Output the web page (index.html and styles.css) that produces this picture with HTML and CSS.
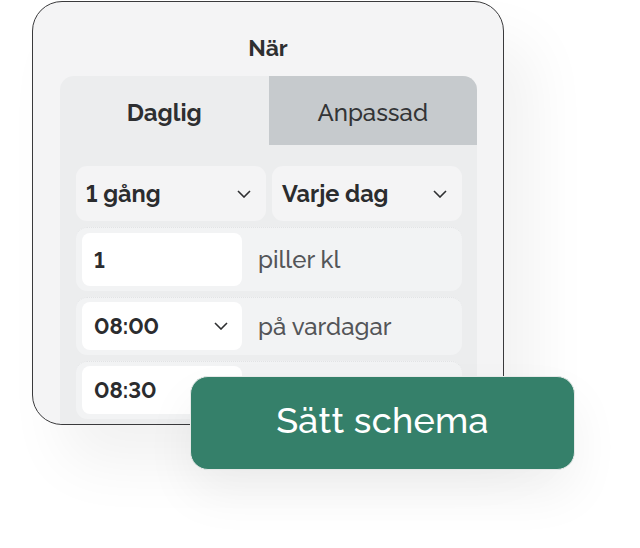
FILE: index.html
```html
<!DOCTYPE html>
<html lang="sv">
<head>
<meta charset="utf-8">
<link rel="stylesheet" href="styles.css">
</head>
<body>
<div class="stage">
  <div class="card">
    <h1 class="title">När</h1>
    <div class="panel">
      <div class="tabs">
        <div class="tab tab-active">Daglig</div>
        <div class="tab tab-idle">Anpassad</div>
      </div>
      <div class="body">
        <div class="selects">
          <div class="select"><span>1 gång</span><svg class="chev" viewBox="0 0 14 8"><path d="M1 1l6 6 6-6"/></svg></div>
          <div class="select"><span>Varje dag</span><svg class="chev" viewBox="0 0 14 8"><path d="M1 1l6 6 6-6"/></svg></div>
        </div>
        <div class="row row-tall">
          <div class="field"><span>1</span></div>
          <span class="label">piller kl</span>
        </div>
        <div class="row">
          <div class="field field-short"><span>08:00</span><svg class="chev" viewBox="0 0 14 8"><path d="M1 1l6 6 6-6"/></svg></div>
          <span class="label">på vardagar</span>
        </div>
        <div class="row">
          <div class="field field-short"><span>08:30</span></div>
        </div>
      </div>
    </div>
  </div>
  <button class="cta">Sätt schema</button>
</div>
</body>
</html>
```
FILE: styles.css
```css
* { box-sizing: border-box; }
html, body { margin: 0; padding: 0; background: #ffffff; }
body { font-family: "Raleway", Lato, "Open Sans", sans-serif; color: #2b2c2e; font-variant-numeric: lining-nums; }
.stage { position: relative; width: 640px; height: 548px; overflow: hidden; padding: 1px 0 0 32px; }
.card {
  width: 472px; height: 424px;
  border: 1.5px solid #3a3a3c; border-radius: 30px;
  background: #f4f4f5; overflow: hidden;
  box-shadow: 30px 40px 60px rgba(0,0,0,0.055);
}
.title { margin: 0; height: 74px; padding-top: 31px; text-align: center; font-size: 23px; font-weight: 700; line-height: 30px; color: #2e2f31; }
.panel { margin: 0 26px 0 27px; height: 360px; background: #ecedee; border-radius: 14px 14px 0 0; overflow: hidden; }
.tabs { display: flex; height: 69px; }
.tab { flex: 1; display: flex; align-items: center; justify-content: center; font-size: 24px; padding-top: 3px; }
.tab-active { font-weight: 700; color: #2e2f31; }
.tab-idle { background: #c6cacd; font-weight: 500; color: #333436; }
.body { padding: 21px 15px 0 16px; display: flex; flex-direction: column; gap: 6px; }
.selects { display: flex; gap: 6px; }
.select { flex: 1; height: 55px; background: #f4f4f5; border-radius: 11px; display: flex; align-items: center; justify-content: space-between; padding: 0 15px 0 10px; font-size: 23.5px; font-weight: 700; }
.chev { width: 14px; height: 8px; fill: none; stroke: #2e2f31; stroke-width: 1.6; }
.row { display: flex; align-items: center; gap: 16px; background: #f2f3f4; border-radius: 11px; padding: 4px 6px 5px; height: 58px; border-top: 1px dotted #e2e3e5; }
.row-tall { height: 64px; padding: 5px 6px; }
.field { width: 160px; height: 100%; background: #ffffff; border-radius: 8px; display: flex; align-items: center; justify-content: space-between; padding: 0 14px 0 12px; font-size: 22px; font-weight: 700; }
.label { font-size: 24px; color: #545558; font-weight: 500; }
.cta {
  position: absolute; left: 190px; top: 376px; width: 385px; height: 94px;
  background: #35806a; border: 1.5px solid #e6e9e8; border-radius: 18px;
  color: #ffffff; font-family: "Raleway", Lato, "Open Sans", sans-serif; font-size: 36px; font-weight: 500;
  font-variant-numeric: lining-nums;
  box-shadow: 0 24px 50px rgba(0,0,0,0.06);
  padding: 0 0 6px; letter-spacing: 0.3px;
}
```
